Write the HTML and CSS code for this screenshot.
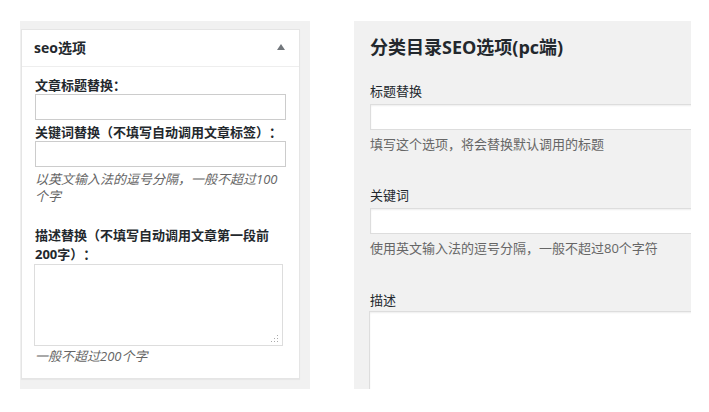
FILE: index.html
```html
<!DOCTYPE html>
<html lang="zh-CN">
<head>
<meta charset="utf-8">
<title>SEO</title>
<link rel="stylesheet" href="styles.css">
</head>
<body>
<div class="page">
  <div class="side">
    <div class="card">
      <div class="card-head">
        <span class="card-title">seo选项</span>
        <span class="toggle"></span>
      </div>
      <div class="card-body">
        <div class="lbl">文章标题替换：</div>
        <input class="inp" type="text">
        <div class="lbl lbl-gap">关键词替换（不填写自动调用文章标签）：</div>
        <input class="inp" type="text">
        <div class="note">以英文输入法的逗号分隔，一般不超过100个字</div>
        <div class="lbl lbl-desc">描述替换（不填写自动调用文章第一段前200字）：</div>
        <div class="ta-wrap">
          <textarea class="ta"></textarea>
          <svg class="grip" width="9" height="9" viewBox="0 0 9 9">
            <rect x="7" y="1" width="1" height="1" fill="#aaa"/>
            <rect x="4" y="4" width="1" height="1" fill="#aaa"/>
            <rect x="7" y="4" width="1" height="1" fill="#aaa"/>
            <rect x="1" y="7" width="1" height="1" fill="#aaa"/>
            <rect x="4" y="7" width="1" height="1" fill="#aaa"/>
            <rect x="7" y="7" width="1" height="1" fill="#aaa"/>
          </svg>
        </div>
        <div class="note note-last">一般不超过200个字</div>
      </div>
    </div>
  </div>
  <div class="main">
    <h2 class="main-title">分类目录SEO选项(pc端)</h2>
    <div class="field">
      <div class="f-lbl">标题替换</div>
      <input class="f-inp" type="text">
      <div class="f-help">填写这个选项，将会替换默认调用的标题</div>
    </div>
    <div class="field field-gap">
      <div class="f-lbl">关键词</div>
      <input class="f-inp" type="text">
      <div class="f-help">使用英文输入法的逗号分隔，一般不超过80个字符</div>
    </div>
    <div class="field field-gap2">
      <div class="f-lbl f-lbl-tight">描述</div>
      <textarea class="f-ta"></textarea>
    </div>
  </div>
</div>
</body>
</html>
```
FILE: styles.css
```css
* { box-sizing: border-box; }
html, body { margin: 0; padding: 0; background: #fff; }
body {
  font-family: "Open Sans", "Noto Sans CJK SC", sans-serif;
  font-size: 13px;
  color: #23282d;
  text-spacing-trim: space-all;
}
.page {
  display: flex;
  align-items: flex-start;
  padding: 21px 0 0 20px;
}
.side {
  width: 290px;
  height: 368px;
  background: #f1f1f1;
  padding: 8px 10px 10px 1px;
}
.card {
  background: #fff;
  border: 1px solid #e5e5e5;
  height: 350px;
  box-shadow: 0 1px 1px rgba(0,0,0,0.04);
}
.card-head {
  height: 37px;
  border-bottom: 1px solid #eee;
  display: flex;
  align-items: center;
  justify-content: space-between;
  padding: 0 14px 0 12px;
}
.card-title {
  font-size: 14px;
  font-weight: 700;
  line-height: 20px;
  color: #23282d;
}
.toggle {
  width: 0;
  height: 0;
  border-left: 4px solid transparent;
  border-right: 4px solid transparent;
  border-bottom: 6px solid #72777c;
  margin-top: -2px;
}
.card-body {
  padding: 9px 13px 0 13px;
}
.lbl {
  font-weight: 700;
  line-height: 18px;
  color: #23282d;
}
.lbl-gap { margin-top: 3px; }
.lbl-desc { margin-top: 21px; line-height: 19px; }
.inp {
  display: block;
  width: 251px;
  height: 26px;
  margin: 0;
  border: 1px solid #ccc;
  background: #fff;
  padding: 0 4px;
}
.note {
  font-style: italic;
  color: #666;
  line-height: 17px;
  margin-top: 4px;
}
.ta-wrap {
  position: relative;
  width: 249px;
  margin-left: -1px;
}
.ta {
  display: block;
  width: 249px;
  height: 82px;
  margin: 0;
  border: 1px solid #ddd;
  resize: none;
  background: #fff;
  font-family: inherit;
}
.grip {
  position: absolute;
  right: 4px;
  bottom: 3px;
}
.note-last { margin-top: 1px; line-height: 18px; }
.main {
  width: 337px;
  height: 368px;
  margin-left: 44px;
  background: #f1f1f1;
  overflow: hidden;
  padding: 13px 0 0 16px;
}
.main-title {
  margin: 0;
  font-size: 18px;
  font-weight: 700;
  line-height: 26px;
  color: #23282d;
}
.field { margin-top: 22px; }
.field-gap { margin-top: 33px; }
.field-gap2 { margin-top: 34px; }
.f-lbl {
  line-height: 18px;
  margin-bottom: 4px;
  color: #23282d;
}
.f-lbl-tight { margin-bottom: 2px; }
.f-inp {
  display: block;
  width: 360px;
  height: 26px;
  margin: 0;
  border: 1px solid #ddd;
  box-shadow: inset 0 1px 2px rgba(0,0,0,0.07);
  background: #fff;
}
.f-help {
  margin-top: 5px;
  line-height: 18px;
  color: #666;
}
.f-ta {
  display: block;
  width: 360px;
  height: 120px;
  margin: 0 0 0 -1px;
  border: 1px solid #ddd;
  box-shadow: inset 0 1px 2px rgba(0,0,0,0.07);
  background: #fff;
  resize: none;
}
```
